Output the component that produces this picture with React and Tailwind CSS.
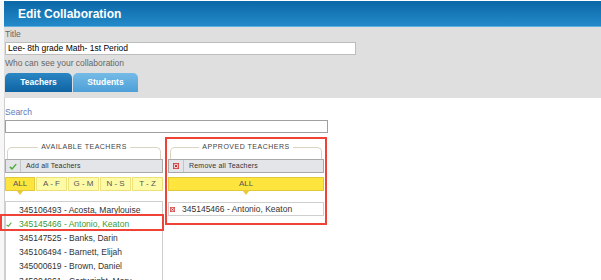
import React from "react";

const available = [
  "345106493 - Acosta, Marylouise",
  "345145466 - Antonio, Keaton",
  "345147525 - Banks, Darin",
  "345106494 - Barnett, Elijah",
  "345000619 - Brown, Daniel",
  "345004961 - Cartwright, Mary",
];

function Check({ className }) {
  return (
    <svg viewBox="0 0 10 8" className={className}>
      <path d="M1 4.5 L3.8 7 L9 1" fill="none" stroke="#4cae3a" strokeWidth="1.8" />
    </svg>
  );
}

function RedX({ className }) {
  return (
    <svg viewBox="0 0 7 7" className={className}>
      <rect x="0.5" y="0.5" width="6" height="6" fill="#f6d6d6" stroke="#d23a3a" />
      <path d="M2 2 L5 5 M5 2 L2 5" stroke="#c22" strokeWidth="1.1" />
    </svg>
  );
}

function Legend({ label }) {
  return (
    <fieldset className="mx-[2px] h-[17px] border-t border-x border-[#dcd4c2] rounded-t-[5px]">
      <legend className="mx-auto px-[3px] text-[7px] leading-[10px] tracking-[0.5px] text-[#444]">
        {label}
      </legend>
    </fieldset>
  );
}

function Bar({ icon, label }) {
  return (
    <div className="h-[14px] flex items-center bg-[#e3e5e9] border border-[#a9a9a9]">
      <div className="w-[15px] h-full flex items-center justify-center border-r border-[#c4c4c4]">
        {icon}
      </div>
      <span className="pl-[5px] text-[7px] tracking-[0.2px] text-[#333]">{label}</span>
    </div>
  );
}

function Pointer() {
  return (
    <div className="w-0 h-0 border-x-[3px] border-x-transparent border-t-[4px] border-t-[#e9c93a]" />
  );
}

export default function App() {
  return (
    <div className="relative w-[601px] h-[280px] overflow-hidden bg-[#f7f7f7] font-['Liberation_Sans',Arial,sans-serif]">
      <div className="h-px bg-white" />
      <div className="ml-[4px]">
        {/* header */}
        <div className="h-[26px] flex items-center pl-[14px] bg-gradient-to-b from-[#0b68a7] to-[#238ac9] border-b border-[#5eaedf]">
          <span className="text-white font-bold text-[12px] leading-none">Edit Collaboration</span>
        </div>

        {/* title + tabs */}
        <div className="h-[71px] bg-[#dfdfdf] pl-[1px]">
          <div className="pt-[2px] text-[8.5px] leading-[10px] text-[#666]">Title</div>
          <div className="mt-[3px] w-[351px] h-[13px] bg-white border border-[#bdbdbd] flex items-center pl-[2px] text-[8.5px] text-black">
            Lee- 8th grade Math- 1st Period
          </div>
          <div className="mt-[3px] text-[8.5px] leading-[10px] text-[#666]">Who can see your collaboration</div>
          <div className="mt-[5px] flex gap-[1px]">
            <div className="w-[67px] h-[19px] rounded-t-[5px] bg-gradient-to-b from-[#2a86c4] to-[#0f64a3] flex items-center justify-center text-white font-bold text-[8.5px]">
              Teachers
            </div>
            <div className="w-[65px] h-[19px] rounded-t-[5px] bg-gradient-to-b from-[#76bbe7] to-[#4c9fd7] flex items-center justify-center text-white font-bold text-[8.5px]">
              Students
            </div>
          </div>
        </div>

        {/* white panel */}
        <div className="bg-white border-l border-[#cfcfcf] h-[200px]">
          <div className="pt-[9px] text-[8.5px] leading-[10px] text-[#5d7bb8]">Search</div>
          <div className="mt-[3px] w-[323px] h-[13px] border border-[#a0a0a0] bg-white" />

          <div className="mt-[9px] flex gap-[5px]">
            {/* available */}
            <div className="w-[158px]">
              <Legend label="AVAILABLE TEACHERS" />
              <Bar icon={<Check className="w-[8px] h-[7px]" />} label="Add all Teachers" />
              <div className="mt-[4px] flex gap-[1px] text-[8px] text-[#555]">
                <div className="w-[30px] h-[14px] bg-[#fde53e] border border-[#e2c93a] flex items-center justify-center">ALL</div>
                {["A - F", "G - M", "N - S", "T - Z"].map((l) => (
                  <div key={l} className="w-[31px] h-[14px] bg-[#fffaa6] border border-[#ece07a] flex items-center justify-center">
                    {l}
                  </div>
                ))}
              </div>
              <div className="h-[10px] pl-[12px]">
                <Pointer />
              </div>
              <div className="border border-[#cfcfcf] pt-px h-[90px]">
                {available.map((name, i) => (
                  <div
                    key={name}
                    className={
                      "relative h-[14.2px] flex items-center pl-[13px] text-[8.5px] " +
                      (i === 1 ? "text-[#3b9a35]" : "text-[#333]")
                    }
                  >
                    {i === 1 && <Check className="absolute left-[0px] w-[6px] h-[5px]" />}
                    {name}
                  </div>
                ))}
              </div>
            </div>

            {/* approved */}
            <div className="w-[156px]">
              <Legend label="APPROVED TEACHERS" />
              <Bar icon={<RedX className="w-[6px] h-[6px]" />} label="Remove all Teachers" />
              <div className="mt-[4px] h-[14px] bg-[#fde53e] border border-[#e2c93a] flex items-center justify-center text-[8px] text-[#555]">
                ALL
              </div>
              <div className="h-[11px] flex justify-center">
                <Pointer />
              </div>
              <div className="h-[14px] border border-[#cfcfcf] flex items-center pl-[1px] text-[8.5px] text-[#333]">
                <RedX className="w-[5px] h-[5px]" />
                <span className="pl-[7px]">345145466 - Antonio, Keaton</span>
              </div>
            </div>
          </div>
        </div>
      </div>

      {/* highlight annotations */}
      <div className="absolute left-0 top-[214px] w-[164px] h-[17px] border-[2.5px] border-[#ef4338]" />
      <div className="absolute left-[165px] top-[137px] w-[162px] h-[88px] border-[2.5px] border-[#ef4338]" />
    </div>
  );
}
